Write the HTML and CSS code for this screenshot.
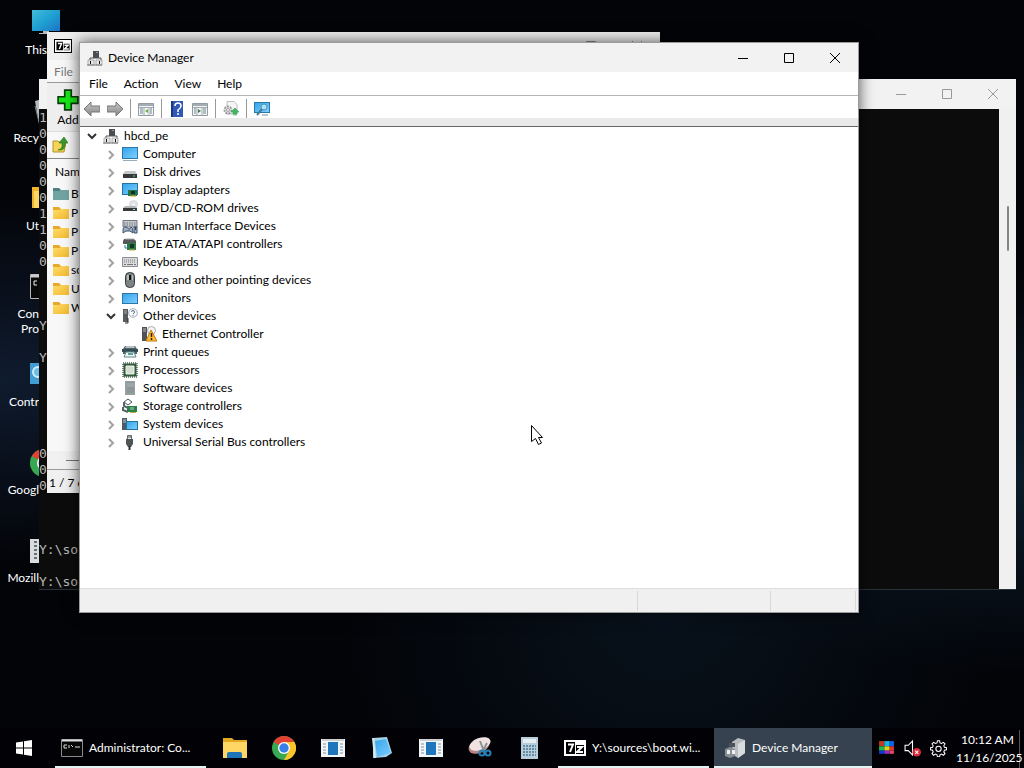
FILE: index.html
```html
<!DOCTYPE html>
<html lang="en">
<head>
<meta charset="utf-8">
<title>Device Manager</title>
<link rel="stylesheet" href="styles.css">
</head>
<body>
<svg class="defs" aria-hidden="true">
  <defs>
    <linearGradient id="blue" x1="0" y1="0" x2="1" y2="1"><stop offset="0" stop-color="#36a5ea"/><stop offset="1" stop-color="#7dceff"/></linearGradient>
    <linearGradient id="cyan" x1="0" y1="0" x2="1" y2="1"><stop offset="0" stop-color="#42bcd8"/><stop offset=".5" stop-color="#1fa0d2"/><stop offset="1" stop-color="#1d72c4"/></linearGradient>
    <linearGradient id="gold" x1="0" y1="0" x2="1" y2="1"><stop offset="0" stop-color="#ffdc6a"/><stop offset="1" stop-color="#f2b92f"/></linearGradient>
    <linearGradient id="grey" x1="0" y1="0" x2="0" y2="1"><stop offset="0" stop-color="#c8c8c8"/><stop offset="1" stop-color="#858585"/></linearGradient>
    <symbol id="i-root" viewBox="0 0 16 16"><path d="M6 1h6v7H6z" fill="#4a4e52"/><path d="M9 2h2v1H9z" fill="#999"/><path d="M3 10V8h11v2" fill="none" stroke="#555"/><path d="M1 10h6v5H1zM9 10h6v5H9z" fill="#e8e8e8" stroke="#909090" stroke-width=".7"/><path d="M3 11h1v3H3zM12 11h1v3h-1z" fill="#111"/><path d="M0 15h15" stroke="#777"/></symbol>
    <symbol id="i-computer" viewBox="0 0 16 16"><path d="M0 1h16v12H0z" fill="#2878ae"/><path d="M1 2h14v10H1z" fill="url(#blue)"/><path d="M1 14.500h14" stroke="#9aacb8"/></symbol>
    <symbol id="i-monitor" viewBox="0 0 16 16"><path d="M0 3h16v11H0z" fill="#2b77ab"/><path d="M1 4h14v9H1z" fill="url(#blue)"/></symbol>
    <symbol id="i-disk" viewBox="0 0 16 16"><path d="M3 7h10l2 3H1z" fill="#c4c6c8"/><path d="M1 10h14v4H1z" fill="#35393c"/><path d="M11 12h2" stroke="#58e07c"/></symbol>
    <symbol id="i-display" viewBox="0 0 16 16"><path d="M0 1h16v12H0z" fill="#25719f"/><path d="M1 2h14v10H1z" fill="url(#blue)"/><path d="M6 8h9v6H6z" fill="#247244"/><path d="M9 9h4v3H9z" fill="#122f20"/><path d="M8 14h6" stroke="#d3a52b"/></symbol>
    <symbol id="i-dvd" viewBox="0 0 16 16"><circle cx="11.500" cy="4.500" r="4" fill="#e2e5e8" stroke="#bbb" stroke-width=".5"/><circle cx="11.500" cy="4.500" r="1" fill="#fff"/><path d="M3 6h10l2 2H1z" fill="#b4b8ba"/><path d="M1 8h14v3H1z" fill="#36393b"/><path d="M11 9.500h2" stroke="#a8e4b8"/></symbol>
    <symbol id="i-hid" viewBox="0 0 16 16"><path d="M1 2.500h14V9H1z" fill="#c8ccd0" stroke="#70757b"/><path d="M2 5h12M2 7h12" stroke="#687078" stroke-dasharray="1.500 1"/><path d="M1 15c0-5 0-6 3-6 2 0 1 2 3 2s1-2 2-2q2 0 2 6l-3-2H4zM12 9h3v6h-3z" fill="#9fb0c9" stroke="#3d5069"/><path d="M13.500 9v3" stroke="#345"/></symbol>
    <symbol id="i-ide" viewBox="0 0 16 16"><path d="M2 3h10l2 2v3H1V5z" fill="#55595b"/><path d="M3 3h9" stroke="#aaa"/><path d="M5 7h9v7H5z" fill="#287944"/><path d="M8 8h4v4H8z" fill="#163526"/><path d="M7 14h6" stroke="#d1aa42"/><path d="M3 9v3h3" fill="none" stroke="#267a9c"/></symbol>
    <symbol id="i-keyboard" viewBox="0 0 16 16"><path d="M.500 3.500h15v9H.500z" fill="#d9dbdd" stroke="#8b8e91"/><path d="M2 6h12M2 8h12" stroke="#777" stroke-dasharray="1 1"/><path d="M2 10.500h2m1 0h6m1 0h2" stroke="#777"/></symbol>
    <symbol id="i-mouse" viewBox="0 0 16 16"><rect x="3.500" y=".500" width="9" height="15" rx="4" fill="#7b8384" stroke="#373c3e"/><path d="M5 3h2v5H5zM10 3h1v5h-1z" fill="#b6bebc"/><path d="M8 3v5" stroke="#111" stroke-width="2"/></symbol>
    <symbol id="i-other" viewBox="0 0 16 16"><path d="M1 1h5v13H1z" fill="#555b60"/><path d="M2 3h3M2 5h3" stroke="#aaa"/><path d="M6 10v5H3" fill="none" stroke="#333"/><circle cx="11" cy="5" r="4.300" fill="#f8fafb" stroke="#a6adb5"/><path d="M9.500 4q0-1.500 1.500-1.500T12.500 4Q12.500 5 11 6m0 1v1" fill="none" stroke="#557199"/></symbol>
    <symbol id="i-warn" viewBox="0 0 16 16"><path d="M1 1h5v14H1z" fill="#4d5358"/><path d="M2 3h3M2 5h3" stroke="#bbb"/><circle cx="10.500" cy="4.500" r="4" fill="#f5f5f5" stroke="#a8a8b0"/><path d="m10 4 6 11H5z" fill="#ffbd35" stroke="#c27b0b"/><path d="M10.500 7v4m0 1v2" stroke="#302000" stroke-width="1.500"/></symbol>
    <symbol id="i-print" viewBox="0 0 16 16"><path d="M3 2h10l2 3v5H1V5z" fill="#496569"/><path d="M4 2h8l1 2H3z" fill="#b6c3c4"/><path d="M0 5h16v3H0z" fill="#334d50"/><path d="M4 8h8l2 5H2z" fill="#eef5f5" stroke="#628888"/><path d="M6 9h5v2H6z" fill="#5ba095"/></symbol>
    <symbol id="i-cpu" viewBox="0 0 16 16"><path d="M1 1h14v14H1z" fill="none" stroke="#7a8a80" stroke-width="2" stroke-dasharray="1 1"/><path d="M1.500 1.500h13v13h-13z" fill="#315a3d"/><path d="M4 4h8v8H4z" fill="#d4ddd2" stroke="#f0f4ee"/></symbol>
    <symbol id="i-software" viewBox="0 0 16 16"><path d="M3 1h10v14H3z" fill="#969fa1"/><path d="M5 2h7v11H5z" fill="#8c9597"/><path d="M5 4h7M5 6h7" stroke="#acb5b7"/><path d="M10 13h1" stroke="#36db75"/></symbol>
    <symbol id="i-storage" viewBox="0 0 16 16"><path d="m2 4 4-3 4 3-4 3z" fill="#fff" stroke="#4a5357"/><path d="M2 4v4l4 2m-5-1v3l5 2" fill="none" stroke="#5a6267" stroke-width="2"/><path d="M5 8h10v6H5z" fill="#27824a"/><path d="M8 9h4v3H8z" fill="#72a681"/><path d="M8 14.500h6" stroke="#caa737"/></symbol>
    <symbol id="i-system" viewBox="0 0 16 16"><path d="M0 2h5v12H0z" fill="#4c5b65"/><path d="M1 4h3M1 6h3" stroke="#b2c5d0"/><path d="M4 5h12v9H4z" fill="#24719e"/><path d="M5 6h10v7H5z" fill="url(#blue)"/></symbol>
    <symbol id="i-usb" viewBox="0 0 16 16"><path d="M5.500 1.500h4v4h-4z" fill="#eee" stroke="#666"/><path d="M7 2v2m2-2v2" stroke="#555"/><path d="M4 5h7v5l-2 3H6l-2-3z" fill="#505456"/><path d="M7.500 12v4" stroke="#333" stroke-width="2"/></symbol>
    <symbol id="i-folder" viewBox="0 0 16 16"><path d="M0 2h6l2 2h8v10H0z" fill="#e6a92a"/><path d="M0 5h6l2-1h8v10H0z" fill="url(#gold)"/></symbol>
    <symbol id="i-folder-sel" viewBox="0 0 16 16"><path d="M0 2h6l2 2h8v10H0z" fill="#4d8080"/><path d="M0 5h6l2-1h8v10H0z" fill="#70a3a2"/></symbol>
    <symbol id="i-left" viewBox="0 0 16 16"><path d="M0 8 7 1v4h9v6H7v4z" fill="url(#grey)" stroke="#777"/></symbol>
    <symbol id="i-right" viewBox="0 0 16 16"><path d="M16 8 9 1v4H0v6h9v4z" fill="url(#grey)" stroke="#777"/></symbol>
    <symbol id="i-7z" viewBox="0 0 22 16"><path d="M0 0h22v16H0z" fill="#fff"/><path d="M2 2h9v12H2zM12 5h8v9h-8z" fill="#000"/><path d="M4 4.500h5L6 12M13 7h5l-5 5h6" fill="none" stroke="#fff" stroke-width="2"/></symbol>
    <symbol id="i-app" viewBox="0 0 24 18"><path d="M0 0h24v18H0z" fill="#f1f6f8"/><path d="M1 1h22" stroke="#aaa"/><path d="M2 5h3m-3 3h3m-3 3h3m-3 3h3M19 5h3m-3 3h3m-3 3h3m-3 3h3" stroke="#8197a4"/><path d="M7 3h10v13H7z" fill="#2076bd"/></symbol>
    <symbol id="i-chrome" viewBox="0 0 24 24"><circle cx="12" cy="12" r="12" fill="#38a852"/><path d="M12 12 1.600 6A12 12 0 0 1 22.400 6H12z" fill="#e34134"/><path d="M12 6h10.400A12 12 0 0 1 12 24l5-9z" fill="#fbc52a"/><circle cx="12" cy="12" r="6" fill="#fff"/><circle cx="12" cy="12" r="4.700" fill="#397fe8"/></symbol>
  </defs>
</svg>

<main class="desktop">
  <nav class="shortcuts" aria-label="Desktop">
    <a class="shortcut wide" href="#pc"><svg viewBox="0 0 32 32"><path d="M4 4h28v21H4z" fill="url(#cyan)"/><path d="M15 25h6v2h-6zM11 27h14v1H11z" fill="#b5bcc0"/></svg><span>This</span></a>
    <a class="shortcut" href="#bin"><svg viewBox="0 0 32 32"><path d="m8 7 19-5-3 28H12z" fill="#b7babe"/><path d="M12 2h12v24H12z" fill="#edeff1"/><path d="m8 12 4 16" stroke="#80858b"/></svg><span>Recy</span></a>
    <a class="shortcut" href="#utilities"><svg viewBox="0 0 32 32"><path d="M5 5h10l3 3h14v18H5z" fill="#efb32e"/><path d="M7 9h25v17H7z" fill="#ffd767"/></svg><span>Ut</span></a>
    <a class="shortcut" href="#prompt"><svg viewBox="0 0 32 32"><path d="M3.500 4.500h28v24h-28z" fill="#090909" stroke="#b5b5b5"/><path d="M4 6h28" stroke="#ccc" stroke-width="3"/><path d="M10 11H7v4h3" fill="none" stroke="#eee"/></svg><span>Con<br>Pro</span></a>
    <a class="shortcut" href="#control"><svg viewBox="0 0 32 32"><path d="M3 5h28v21H3z" fill="#429ed2"/><circle cx="11" cy="14" r="5" fill="#6fbde4" stroke="#cdeefa" stroke-width="2"/></svg><span>Contr</span></a>
    <a class="shortcut" href="#chrome"><svg viewBox="0 0 32 32"><use href="#i-chrome" x="3" y="3" width="28" height="28"/></svg><span>Googl</span></a>
    <a class="shortcut" href="#mozilla"><svg viewBox="0 0 32 32"><path d="M3 5h24v24H3z" fill="#d8dcdf"/><path d="M7 8h3m-3 4h3m-3 4h3m-3 4h3m-3 4h3M14 8h11m-11 4h11m-11 4h11" stroke="#65707a" stroke-width="2"/></svg><span>Mozill</span></a>
  </nav>

  <section class="window console" aria-label="Command Prompt">
    <header class="titlebar"><div class="controls"><button aria-label="Minimize"><svg viewBox="0 0 12 12"><path d="M1 6.500h10"/></svg></button><button aria-label="Maximize"><svg viewBox="0 0 12 12"><path d="M1.500 1.500h9v9h-9z"/></svg></button><button aria-label="Close"><svg viewBox="0 0 12 12"><path d="m1 1 10 10M11 1 1 11"/></svg></button></div></header>
    <div class="console-body">
      <ol class="lines">
        <li>1</li><li>0</li><li>0</li><li>0</li><li>0</li><li>0</li><li>1</li><li>1</li><li>0</li><li>0</li>
        <li></li><li></li><li></li><li>Y</li><li></li><li>Y</li>
        <li></li><li></li><li></li><li></li><li></li><li>0</li><li>0</li><li>0</li>
        <li></li><li></li><li></li><li>Y:\so</li><li></li><li>Y:\so</li>
      </ol>
      <div class="console-scroll"><i></i></div>
    </div>
  </section>

  <section class="window archive" aria-label="7-Zip">
    <header class="titlebar"><svg class="badge7"><use href="#i-7z"/></svg><div class="controls"><button aria-label="Minimize"><svg viewBox="0 0 12 12"><path d="M1 6.500h10"/></svg></button><button aria-label="Maximize"><svg viewBox="0 0 12 12"><path d="M1.500 1.500h9v9h-9z"/></svg></button><button aria-label="Close"><svg viewBox="0 0 12 12"><path d="m1 1 10 10M11 1 1 11"/></svg></button></div></header>
    <div class="archive-menu"><button>File</button></div>
    <div class="archive-tools"><button><svg viewBox="0 0 20 20"><path d="M7 1h6v6h6v6h-6v6H7v-6H1V7h6z" fill="#16e817" stroke="#083c08" stroke-width="1.500"/></svg>Add</button></div>
    <div class="archive-path"><button aria-label="Up"><svg viewBox="0 0 16 16"><path d="M1 4h5l1 1h7l-2 10H1z" fill="#f3d558" stroke="#b5932c"/><path d="M6 13q5-1 4-7H7l5-6 4 6h-3q1 8-7 7" fill="#379a2b" stroke="#216e19" stroke-width=".6"/></svg></button></div>
    <div class="archive-head">Nam</div>
    <ul class="archive-list">
      <li><svg><use href="#i-folder-sel"/></svg>B</li>
      <li><svg><use href="#i-folder"/></svg>P</li>
      <li><svg><use href="#i-folder"/></svg>P</li>
      <li><svg><use href="#i-folder"/></svg>P</li>
      <li><svg><use href="#i-folder"/></svg>so</li>
      <li><svg><use href="#i-folder"/></svg>U</li>
      <li><svg><use href="#i-folder"/></svg>W</li>
    </ul>
    <div class="archive-scroll"><i></i></div>
    <footer>1 / 7 o</footer>
  </section>

  <section class="window manager" aria-label="Device Manager">
    <header class="titlebar"><svg class="icon"><use href="#i-root"/></svg><h1>Device Manager</h1><div class="controls"><button aria-label="Minimize"><svg viewBox="0 0 12 12"><path d="M1 6.500h10"/></svg></button><button aria-label="Maximize"><svg viewBox="0 0 12 12"><path d="M1.500 1.500h9v9h-9z"/></svg></button><button aria-label="Close"><svg viewBox="0 0 12 12"><path d="m1 1 10 10M11 1 1 11"/></svg></button></div></header>
    <nav class="menu"><button>File</button><button>Action</button><button>View</button><button>Help</button></nav>
    <div class="toolbar">
      <button aria-label="Back"><svg><use href="#i-left"/></svg></button>
      <button aria-label="Forward"><svg><use href="#i-right"/></svg></button>
      <hr>
      <button aria-label="Console tree"><svg viewBox="0 0 16 16"><path d="M.500 2.500h15v12H.500z" fill="#f4f6f6" stroke="#929ba3"/><path d="M1 4h14" stroke="#a4adb4" stroke-width="2"/><path d="M2 8h3m-3 2h3m-3 2h3M12 8h2m-2 2h2m-2 2h2" stroke="#6e8395"/><path d="M6 6v8M11 6v8M1 6.500h14" stroke="#a3acb3"/><path d="m10 8-3 2 3 2z" fill="#71ad41"/></svg></button>
      <hr>
      <button aria-label="Help"><svg viewBox="0 0 16 16"><path d="M2 0h12v16H2z" fill="#3158b6"/><path d="M2 0h2v16H2z" fill="#1d377d"/><path d="M6 5q0-3 3-3t3 3q0 2-3 4v2m0 1v2" fill="none" stroke="#fff" stroke-width="1.500"/></svg></button>
      <button aria-label="Action pane"><svg viewBox="0 0 16 16"><path d="M.500 2.500h15v12H.500z" fill="#f4f6f6" stroke="#929ba3"/><path d="M1 4h14" stroke="#a4adb4" stroke-width="2"/><path d="M2 8h2m-2 2h2m-2 2h2M11 8h3m-3 2h3m-3 2h3" stroke="#6e8395"/><path d="M5 6v8M10 6v8M1 6.500h14" stroke="#a3acb3"/><path d="m6 8 3 2-3 2z" fill="#477f42"/></svg></button>
      <hr>
      <button aria-label="Update driver"><svg viewBox="0 0 16 16"><path d="M4 .500h7l3 3V13H4z" fill="#f5f5f5" stroke="#bdbdbd"/><circle cx="5" cy="9" r="3.500" fill="#eee" stroke="#999" stroke-width="2" stroke-dasharray="2 1"/><circle cx="5" cy="9" r="1.500" fill="#fff" stroke="#999"/><path d="m8 11 4-4 4 4h-2v2h-4v-2zM10 14h4" fill="#42b866" stroke="#36a35a" stroke-width=".6"/></svg></button>
      <hr>
      <button aria-label="Scan for hardware changes"><svg viewBox="0 0 16 16"><path d="M0 1h16v11H0z" fill="#2878a9"/><path d="M1 2h14v9H1z" fill="url(#blue)"/><circle cx="10" cy="6" r="3" fill="#a9e2fa" stroke="#4e91b5"/><path d="m8 8-5 6" stroke="#477b96" stroke-width="2"/><path d="M8 14h6" stroke="#7c8c97"/></svg></button>
    </div>
    <ul class="tree" id="tree">
      <li><div class="row"><button class="twist open" aria-label="Collapse"><svg viewBox="0 0 16 16"><path d="m4 6 4 4 4-4"/></svg></button><svg class="icon"><use href="#i-root"/></svg><span>hbcd_pe</span></div>
        <ul>
          <li><div class="row"><button class="twist" aria-label="Expand"><svg viewBox="0 0 16 16"><path d="m6 5 4 4-4 4"/></svg></button><svg class="icon"><use href="#i-computer"/></svg><span>Computer</span></div></li>
          <li><div class="row"><button class="twist" aria-label="Expand"><svg viewBox="0 0 16 16"><path d="m6 5 4 4-4 4"/></svg></button><svg class="icon"><use href="#i-disk"/></svg><span>Disk drives</span></div></li>
          <li><div class="row"><button class="twist" aria-label="Expand"><svg viewBox="0 0 16 16"><path d="m6 5 4 4-4 4"/></svg></button><svg class="icon"><use href="#i-display"/></svg><span>Display adapters</span></div></li>
          <li><div class="row"><button class="twist" aria-label="Expand"><svg viewBox="0 0 16 16"><path d="m6 5 4 4-4 4"/></svg></button><svg class="icon"><use href="#i-dvd"/></svg><span>DVD/CD-ROM drives</span></div></li>
          <li><div class="row"><button class="twist" aria-label="Expand"><svg viewBox="0 0 16 16"><path d="m6 5 4 4-4 4"/></svg></button><svg class="icon"><use href="#i-hid"/></svg><span>Human Interface Devices</span></div></li>
          <li><div class="row"><button class="twist" aria-label="Expand"><svg viewBox="0 0 16 16"><path d="m6 5 4 4-4 4"/></svg></button><svg class="icon"><use href="#i-ide"/></svg><span>IDE ATA/ATAPI controllers</span></div></li>
          <li><div class="row"><button class="twist" aria-label="Expand"><svg viewBox="0 0 16 16"><path d="m6 5 4 4-4 4"/></svg></button><svg class="icon"><use href="#i-keyboard"/></svg><span>Keyboards</span></div></li>
          <li><div class="row"><button class="twist" aria-label="Expand"><svg viewBox="0 0 16 16"><path d="m6 5 4 4-4 4"/></svg></button><svg class="icon"><use href="#i-mouse"/></svg><span>Mice and other pointing devices</span></div></li>
          <li><div class="row"><button class="twist" aria-label="Expand"><svg viewBox="0 0 16 16"><path d="m6 5 4 4-4 4"/></svg></button><svg class="icon"><use href="#i-monitor"/></svg><span>Monitors</span></div></li>
          <li><div class="row"><button class="twist open" aria-label="Collapse"><svg viewBox="0 0 16 16"><path d="m4 6 4 4 4-4"/></svg></button><svg class="icon"><use href="#i-other"/></svg><span>Other devices</span></div>
            <ul><li><div class="row leaf"><svg class="icon"><use href="#i-warn"/></svg><span>Ethernet Controller</span></div></li></ul></li>
          <li><div class="row"><button class="twist" aria-label="Expand"><svg viewBox="0 0 16 16"><path d="m6 5 4 4-4 4"/></svg></button><svg class="icon"><use href="#i-print"/></svg><span>Print queues</span></div></li>
          <li><div class="row"><button class="twist" aria-label="Expand"><svg viewBox="0 0 16 16"><path d="m6 5 4 4-4 4"/></svg></button><svg class="icon"><use href="#i-cpu"/></svg><span>Processors</span></div></li>
          <li><div class="row"><button class="twist" aria-label="Expand"><svg viewBox="0 0 16 16"><path d="m6 5 4 4-4 4"/></svg></button><svg class="icon"><use href="#i-software"/></svg><span>Software devices</span></div></li>
          <li><div class="row"><button class="twist" aria-label="Expand"><svg viewBox="0 0 16 16"><path d="m6 5 4 4-4 4"/></svg></button><svg class="icon"><use href="#i-storage"/></svg><span>Storage controllers</span></div></li>
          <li><div class="row"><button class="twist" aria-label="Expand"><svg viewBox="0 0 16 16"><path d="m6 5 4 4-4 4"/></svg></button><svg class="icon"><use href="#i-system"/></svg><span>System devices</span></div></li>
          <li><div class="row"><button class="twist" aria-label="Expand"><svg viewBox="0 0 16 16"><path d="m6 5 4 4-4 4"/></svg></button><svg class="icon"><use href="#i-usb"/></svg><span>Universal Serial Bus controllers</span></div></li>
        </ul>
      </li>
    </ul>
    <footer class="status"><span></span><span></span><span></span></footer>
  </section>

  <svg class="cursor" viewBox="0 0 14 22" aria-hidden="true"><path d="M1.500 1.500v16l4-3 3 6 3-1.500-3-5.500h4z" fill="#fff" stroke="#000"/></svg>
</main>

<footer class="taskbar">
  <button class="start" aria-label="Start"><svg viewBox="0 0 16 16"><path d="m0 2.500 7-1v6H0zM8 1.300 16 0v7.500H8zM0 8.500h7v6l-7-1zM8 8.500h8V16l-8-1.300z" fill="#fff"/></svg></button>
  <button class="task"><svg viewBox="0 0 22 20"><path d="M.500 1.500h21v17H.500z" fill="#080808" stroke="#8b8b8b"/><path d="M1 2.500h20" stroke="#ddd" stroke-width="2"/><path d="M3 7h3M3 7v3h3m2-3v3m2-3 2 2m2 0h5" fill="none" stroke="#ddd"/></svg><span>Administrator: Co...</span></button>
  <div class="pins">
    <button aria-label="File Explorer"><svg viewBox="0 0 24 24"><path d="M0 2h9l2 2h13v18H0z" fill="#e2a824"/><path d="M0 6h24v16H0z" fill="#ffd664"/><path d="M4 22v-4q0-2 2-2h11q2 0 2 2v4z" fill="#1e73b9"/></svg></button>
    <button aria-label="Chrome"><svg><use href="#i-chrome"/></svg></button>
    <button aria-label="Run"><svg><use href="#i-app"/></svg></button>
    <button aria-label="Notepad"><svg viewBox="0 0 24 24"><path d="m3 2 14-1 5 16-6 4-13 1z" fill="#a5d4e9"/><path d="m5 5 11-2 5 14-14 4z" fill="url(#blue)"/><path d="m3 2 2 20" stroke="#d8e8ed" stroke-width="2"/></svg></button>
    <button aria-label="Application"><svg><use href="#i-app"/></svg></button>
    <button aria-label="Snipping Tool"><svg viewBox="0 0 24 24"><ellipse cx="11" cy="10" rx="11" ry="7" transform="rotate(-25 11 10)" fill="#b98386"/><ellipse cx="12" cy="8" rx="11" ry="6" transform="rotate(-20 12 8)" fill="#f1e2e2"/><path d="m12 5 5 13M19 7l-5 9" stroke="#879494" stroke-width="2"/><circle cx="14" cy="17" r="2.500" fill="none" stroke="#2480b5" stroke-width="2"/><circle cx="20" cy="17" r="2.500" fill="none" stroke="#2480b5" stroke-width="2"/></svg></button>
    <button aria-label="Calculator"><svg viewBox="0 0 24 24"><path d="M4 1h17v22H4z" fill="#b8cdda"/><path d="M6 3h13v4H6z" fill="#e6eef2"/><path d="M6 10h13M6 13h13M6 16h13M6 19h13" stroke="#668ca8" stroke-width="2" stroke-dasharray="2 1"/></svg></button>
  </div>
  <button class="task"><svg viewBox="0 0 22 16"><use href="#i-7z"/></svg><span>Y:\sources\boot.wi...</span></button>
  <button class="task active"><svg viewBox="0 0 22 20"><path d="m7 4 6-4 7 2v13l-7 5-6-4z" fill="#b9bdc0"/><path d="m13 6 7-4v13l-7 5z" fill="#d9dcdd"/><path d="m0 11 5-2 5 2v7l-5 2-5-2z" fill="#888f94"/><path d="M2 12h3v4H2zM7 12h3v4H7z" fill="#edf0f1"/><path d="M4 5h6v4H4z" fill="#4b5258"/></svg><span>Device Manager</span></button>
  <div class="tray">
    <svg viewBox="0 0 16 16" role="img" aria-label="Display"><path d="M1 1h5v5H1z" fill="#c5371f"/><path d="M6 1h5v5H6z" fill="#18b6dd"/><path d="M11 1h4v5h-4z" fill="#1261ee"/><path d="M1 6h5v4H1z" fill="#17bb50"/><path d="M6 6h5v4H6z" fill="#e8cf1a"/><path d="M11 6h4v4h-4z" fill="#dd3a29"/><path d="M1 10h5v3H1z" fill="#123ad9"/><path d="M6 10h5v3H6z" fill="#972ccc"/><path d="M11 10h4v3h-4z" fill="#e04a62"/></svg>
    <svg viewBox="0 0 16 16" role="img" aria-label="Muted"><path d="M1 5h3l4-4v13l-4-4H1z" fill="none" stroke="#fff"/><circle cx="12" cy="11.500" r="4" fill="#d8283a"/><path d="m10.500 10 3 3m0-3-3 3" stroke="#fff"/></svg>
    <svg viewBox="0 0 16 16" role="img" aria-label="Settings"><path d="m7 .700h2l.4 2 1.500.6 1.700-1.100 1.500 1.500L13 5.400l.6 1.500 2 .4v2l-2 .4-.6 1.500 1.100 1.700-1.500 1.500-1.700-1.100-1.500.6-.4 2H7l-.4-2-1.500-.6-1.700 1.100-1.500-1.500L3 11.200l-.6-1.500-2-.4v-2l2-.4L3 5.400 1.900 3.700l1.500-1.500 1.700 1.100 1.500-.6z" fill="none" stroke="#fff"/><circle cx="8" cy="8.300" r="2.500" fill="none" stroke="#fff"/></svg>
  </div>
  <div class="clock"><time>10:12 AM</time><time>11/16/2025</time></div>
</footer>
</body>
</html>
```
FILE: styles.css
```css
* { box-sizing: border-box; }
html, body { height: 100%; }
body {
  margin: 0;
  display: flex;
  flex-direction: column;
  overflow: hidden;
  background: #020307;
  color: #000;
  font: 12px/18px Lato, "Open Sans", sans-serif;
}
button { border: 0; padding: 0; background: none; font: inherit; color: inherit; }
ul, ol { list-style: none; margin: 0; padding: 0; }
svg { display: block; flex: none; }
.defs { position: absolute; width: 0; height: 0; }

.desktop {
  position: relative;
  flex: 1;
  min-height: 0;
  overflow: hidden;
  background:
    radial-gradient(ellipse at 65% 84%, #08121c 0, transparent 34%),
    radial-gradient(ellipse at 0 52%, #0f1b2e 0, transparent 34%),
    radial-gradient(ellipse at 100% 65%, #0b1c2a 0, transparent 30%),
    #030408;
}
.shortcuts { display: flex; flex-direction: column; padding-top: 6px; width: 39px; }
.shortcut { display: flex; flex-direction: column; align-items: flex-end; height: 88px; color: #fff; text-align: right; text-decoration: none; line-height: 15px; white-space: nowrap; }
.shortcut svg { width: 32px; height: 32px; margin: 0 -20px 4px 0; }
.shortcut.wide { width: 47px; }
.shortcut.wide svg { margin-right: -13px; }

/* windows */
.window { position: absolute; display: flex; flex-direction: column; overflow: hidden; }
.titlebar { display: flex; align-items: center; flex: none; background: #f2f2f2; }
.titlebar h1 { margin: 0; font-size: 12px; font-weight: 400; }
.controls { display: flex; margin-left: auto; }
.controls button { display: grid; place-items: center; width: 46px; height: 28px; }
.controls svg { width: 12px; height: 12px; fill: none; stroke: currentColor; }

.console { left: 39px; top: 79px; right: 8px; bottom: 138px; background: #0c0c0c; border-bottom: 1px solid #26323c; }
.console .titlebar { height: 30px; color: #999; }
.console-body { display: flex; flex: 1; min-height: 0; }
.lines { flex: 1; padding-top: 1px; color: #b8b8b8; font: 13px/16px "DejaVu Sans Mono", monospace; }
.lines li { height: 16px; }
.console-scroll { width: 17px; background: #f0f0f0; padding: 97px 0 0 8px; }
.console-scroll i { display: block; width: 2px; height: 45px; border-radius: 1px; background: #858585; }

.archive { left: 47px; top: 32px; right: 364px; bottom: 235px; background: #f8f8f8; }
.archive .titlebar { height: 28px; padding-left: 8px; background: #eee; color: #888; }
.badge7 { width: 16px; height: 12px; outline: 1px solid #000; }
.archive-menu { height: 23px; padding: 3px 7px; border-bottom: 1px solid #999; color: #777; background: #f7f7f7; }
.archive-tools { height: 49px; padding: 6px 10px; background: #eee; border-bottom: 1px solid #ddd; }
.archive-tools button { display: flex; flex-direction: column; align-items: center; line-height: 18px; }
.archive-tools svg { width: 22px; height: 22px; }
.archive-path { height: 27px; padding: 5px; border-bottom: 1px solid #888; }
.archive-path svg { width: 16px; height: 16px; }
.archive-head { height: 25px; padding: 4px 8px; }
.archive-list { flex: 1; min-height: 0; }
.archive-list li { display: flex; align-items: center; gap: 2px; height: 19px; padding-left: 6px; }
.archive-list svg { width: 16px; height: 16px; }
.archive-scroll { height: 19px; padding: 9px 19px; background: #f1f1f1; border-bottom: 1px solid #999; }
.archive-scroll i { display: block; width: 50%; height: 1px; background: #777; }
.archive footer { height: 23px; padding: 4px 2px 0; background: #f0f0f0; }

.manager { left: 79px; top: 42px; right: 165px; bottom: 115px; background: #fff; border: 1px solid #9a9a9a; box-shadow: 0 0 14px #000a; }
.manager .titlebar { height: 29px; padding-left: 7px; gap: 5px; }
.icon { width: 16px; height: 16px; }
.menu { display: flex; align-items: center; height: 24px; padding: 0 1px; border-bottom: 1px solid #b4b4b4; }
.menu button { padding: 0 8px; }
.toolbar { display: flex; align-items: center; height: 31px; padding: 0 0 5px 4px; gap: 7px; background: linear-gradient(#fff 22px, #eaeaea 22px); border-bottom: 1px solid #666; }
.toolbar svg { width: 16px; height: 16px; }
.toolbar hr { width: 1px; height: 19px; margin: 0; border: 0; background: #999; }
.tree { flex: 1; min-height: 0; padding: 0 4px; overflow: hidden; }
.tree ul { padding-left: 19px; }
.row { display: flex; align-items: center; height: 18px; }
.row .icon { margin-right: 5px; }
.leaf { padding-left: 19px; }
.tree ul .leaf { padding-left: 0; }
.twist { width: 16px; height: 16px; margin-right: 3px; }
.twist svg { width: 16px; height: 16px; fill: none; stroke: #a2a2a2; stroke-width: 2; }
.twist.open svg { stroke: #333; }
.tree ul ul { padding-left: 38px; }
.status { display: flex; height: 24px; background: #f0f0f0; border-top: 1px solid #ddd; padding: 2px 2px 1px 0; }
.status span { border-right: 1px solid #d8d8d8; width: 85px; }
.status span:first-child { flex: 1; }
.status span:nth-child(2) { width: 133px; }
.cursor { position: absolute; left: 530px; top: 424px; width: 14px; height: 22px; }

/* taskbar */
.taskbar { display: flex; flex: none; height: 40px; background: #020206; color: #fff; }
.start { display: grid; place-items: center; width: 48px; margin-right: 7px; }
.start svg { width: 16px; height: 16px; }
.task { display: flex; align-items: center; gap: 6px; width: 151px; padding: 2px 6px 0; border-bottom: 2px solid #e2f4f2; white-space: nowrap; }
.task svg { width: 22px; height: 20px; }
.task.active { width: 158px; margin-left: 5px; padding-left: 11px; background: #36424f; gap: 5px; }
.pins { display: flex; flex: 1; padding: 0 5px 0 4px; }
.pins button { display: grid; place-items: center; flex: 1; }
.pins svg { width: 24px; height: 24px; }
.tray { display: flex; align-items: center; gap: 9px; padding-left: 6px; }
.tray svg { width: 17px; height: 17px; }
.clock { display: flex; flex-direction: column; justify-content: center; width: 64px; margin: 2px 4px 0 9px; border-right: 1px solid #555; text-align: center; }
```
